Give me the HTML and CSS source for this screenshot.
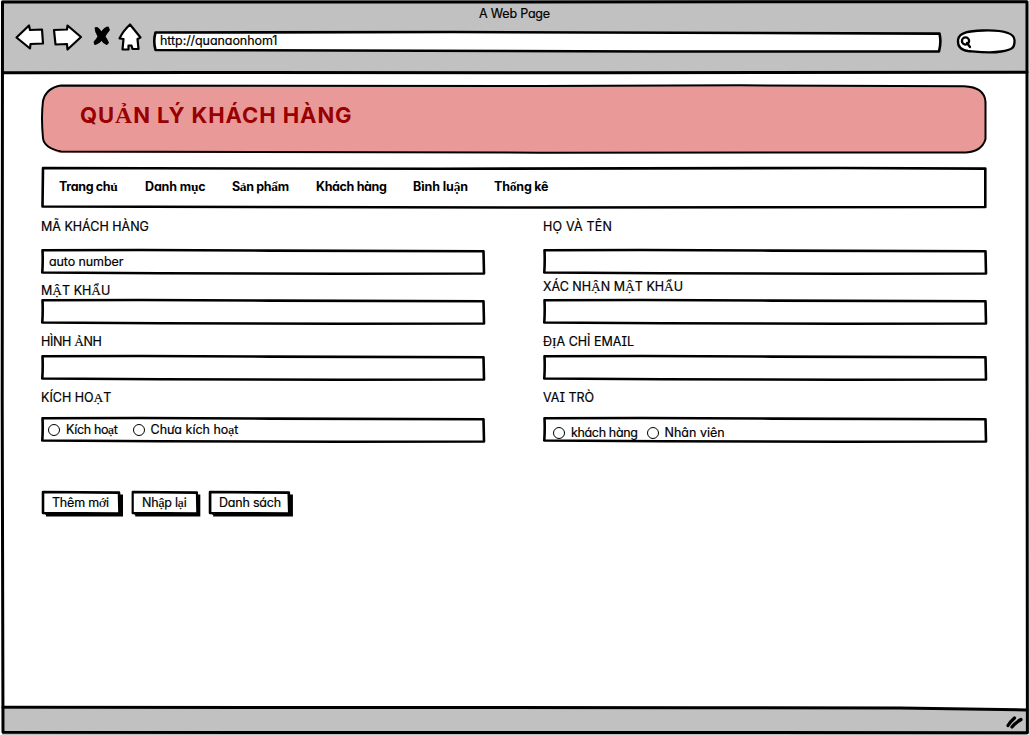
FILE: index.html
```html
<!DOCTYPE html>
<html lang="vi">
<head>
<meta charset="utf-8">
<title>Quản lý khách hàng</title>
<link rel="stylesheet" href="styles.css">
</head>
<body>
<svg class="defs" width="0" height="0">
  <symbol id="field" viewBox="0 0 446 28" preserveAspectRatio="none">
    <path d="M2.5 2.3 L100 2 L230 2.6 L443.5 3.2 L444 25.5 L300 25.7 L120 25.2 L2.3 24.500 Q3 13 2.500 2.300Z"/>
  </symbol>
  <symbol id="btn" viewBox="0 0 84 28" preserveAspectRatio="none">
    <path d="M3.5 4.5H82V26.500H5V25L3.5 24Z" fill="#000" stroke="none"/>
    <path d="M2 2 L78 2.6 L78.500 23.6 L2 23Z"/>
  </symbol>
</svg>
<div class="window">
  <svg class="ink" viewBox="0 0 1029 735">
    <path d="M2.5 2 L1027 1.8 L1027 300 L1027.4 732.7 L3 732.3 L2.2 400Z"/>
    <path d="M3 72.8 L200 72.4 L600 72.8 L1027 72.2 M3 707.3 L700 707.7 L900 708 L1027 710"/>
  </svg>
  <header class="chrome">
    <div class="caption">A Web Page</div>
    <div class="tools">
      <svg class="nav-icons" viewBox="0 0 130 32">
        <path d="M2.500 15.500 L15 3.500 L16 8 L28 7.500 L29 21.500 L16.500 22 L16 26.500Z"/>
        <path d="M40 8 L53 7.500 L53.500 3.500 L67 15 L53.500 27.500 L53 22 L41.500 22.500Z"/>
        <path d="M81.500 6 Q84 5 87.500 11 Q90.500 6 94 5.500 L95 8 Q92.500 11 90.500 14.500 Q93 18 94 20.500 L92.500 22 Q89.500 20.500 87.500 17.500 Q84.500 21.500 81 22 L80.500 20 Q82.500 18.500 84.500 14.500 Q81.500 10 81.500 6Z" class="cross"/>
        <path d="M116 2.500 L126.500 15.500 L123.500 17 L124.500 27 L118.500 27 L117.500 23.500 L114.500 23.500 L114.500 27.500 L108.500 27.500 L109.500 17 L105.500 16.500 Q109 9 116 2.500Z"/>
      </svg>
      <div class="address">
        <svg class="ink" viewBox="0 0 792 24"><path d="M3.500 2.500 L300 2 L787.500 3.600 Q789.500 12 787 21.500 L500 21.500 L3.500 20 Q1 11 3.500 2.500Z"/></svg>
        <span class="url">http://quanaonhom1</span>
      </div>
      <svg class="search" viewBox="0 0 62 28">
        <path d="M3 13 C4 5 15 4 28 3.500 C45 3 59 5 59.500 13 C60 21 57 23 46 24.500 C35 26.500 24 25 13 24 C6 23 2.500 19 3 13Z"/>
        <circle cx="10.500" cy="14" r="3.600"/><path d="M12 16 L15 20"/>
      </svg>
    </div>
  </header>
  <main class="page">
    <h1 class="banner">
      <svg class="ink" viewBox="0 0 950 74"><rect x="3" y="4" width="943" height="67" rx="20" class="fill"/><path d="M21 3.500 L500 4 L700 3.300 L924 4.300 Q944.500 5 945.500 20 L945.500 57 Q942 69.500 926 70.500 L500 70.700 L21 69.500 Q4 66 3 56 Q1 35 3 19 Q6 6 21 3.500Z"/></svg>
      <span>QU<i>Ả</i>N LÝ KHÁCH HÀNG</span>
    </h1>
    <nav class="menu">
      <svg class="ink" viewBox="0 0 947 44"><path d="M3 2 L400 2.800 L800 2 L945.300 2.600 L945.300 41 L500 41.500 L2.500 40.500 L3 2Z"/></svg>
      <a class="home">Trang ch<i>ủ</i></a><a class="category">Danh m<i>ụ</i>c</a><a class="product">S<i>ả</i>n ph<i>ẩ</i>m</a><a class="customer">Khách hàng</a><a class="comment">Bình lu<i>ậ</i>n</a><a class="stats">Th<i>ố</i>ng kê</a>
    </nav>
    <form class="columns">
      <div class="column">
        <label class="name">MÃ KHÁCH HÀNG</label>
        <div class="box"><svg class="ink"><use href="#field"/></svg><span class="auto">auto number</span></div>
        <label class="name two">M<i>Ậ</i>T KH<i>Ẩ</i>U</label>
        <div class="box"><svg class="ink"><use href="#field"/></svg></div>
        <label class="name three tight">HÌNH <i>Ả</i>NH</label>
        <div class="box"><svg class="ink"><use href="#field"/></svg></div>
        <label class="name four">KÍCH HO<i>Ạ</i>T</label>
        <div class="box"><svg class="ink"><use href="#field"/></svg><b class="radio"></b><span class="tight">Kích ho<i>ạ</i>t</span><b class="radio next"></b><span>Chưa kích ho<i>ạ</i>t</span></div>
      </div>
      <div class="column">
        <label class="name wide">HỌ VÀ TÊN</label>
        <div class="box"><svg class="ink"><use href="#field"/></svg></div>
        <label class="name two"><span class="raised">XÁC NH<i>Ậ</i>N M<i>Ậ</i>T KH<i>Ẩ</i>U</span></label>
        <div class="box"><svg class="ink"><use href="#field"/></svg></div>
        <label class="name three">Đ<i>Ị</i>A CHỈ EMA<u>I</u>L</label>
        <div class="box"><svg class="ink"><use href="#field"/></svg></div>
        <label class="name four">VA<u>I</u> TRÒ</label>
        <div class="box role"><svg class="ink"><use href="#field"/></svg><b class="radio"></b><span class="tight">khách hàng</span><b class="radio next"></b><span>Nhân viên</span></div>
      </div>
    </form>
    <div class="actions">
      <button class="add" type="button"><svg class="ink"><use href="#btn"/></svg><span>Thêm m<i>ớ</i>i</span></button>
      <button class="reset" type="button"><svg class="ink"><use href="#btn"/></svg><span>Nh<i>ậ</i>p l<i>ạ</i>i</span></button>
      <button class="list" type="button"><svg class="ink"><use href="#btn"/></svg><span>Danh sách</span></button>
    </div>
  </main>
  <footer class="status"><svg class="grip" viewBox="0 0 20 16"><path d="M3 11.500 Q5 8 9.500 4 M7 13 Q10 9 16 5.500"/></svg></footer>
</div>
</body>
</html>
```
FILE: styles.css
```css
* { box-sizing: border-box; }
body { margin: 0; background: #fff; color: #000; font: 12.5px/16px Inter, "Noto Sans", sans-serif; font-feature-settings: "cv11"; -webkit-text-stroke: 0.2px; }
.defs { position: absolute; }
i { font-style: normal; font-family: "Liberation Serif", serif; font-size: 1.08em; line-height: 0; }
u { text-decoration: none; font-feature-settings: "cv08"; }
svg { fill: none; stroke: #000; stroke-width: 2.6; stroke-linejoin: round; stroke-linecap: round; }
.ink { position: absolute; left: 0; top: 0; width: 100%; height: 100%; }
.ink use { width: 100%; height: 100%; }

.window { position: relative; width: 1029px; height: 735px; display: flex; flex-direction: column; overflow: hidden; }
.window > .ink { z-index: 1; stroke-width: 3; pointer-events: none; }

.chrome { height: 73px; margin: 0 2px; background: #c1c1c1; padding-top: 6px; }
.caption { text-align: center; letter-spacing: -0.2px; }
.tools { display: flex; align-items: flex-start; padding-left: 12px; }
.nav-icons { width: 130px; height: 32px; fill: #fff; stroke-width: 2.2; }
.cross { fill: #000; stroke-width: 1.8; }
.address { position: relative; width: 792px; height: 24px; margin: 8px 0 0 8px; padding: 3px 8px; }
.address .ink { fill: #fff; }
.url { position: relative; letter-spacing: -0.07px; }
.search { width: 62px; height: 28px; margin: 5px 0 0 11px; fill: #fff; stroke-width: 2.3; }

.page { flex: 1; padding: 9px 0 0 40px; }
.banner { position: relative; width: 950px; height: 74px; margin: 0; padding: 21px 0 0 40px; font-size: 22px; line-height: 24px; color: #900; letter-spacing: 0.92px; -webkit-text-stroke: 0; }
.banner .ink { stroke-width: 2; }
.banner .fill { fill: #ea9999; stroke: none; }
.banner span, .box span, .actions span, .menu a, .radio { position: relative; }

.menu { position: relative; width: 947px; height: 44px; margin: 10px 0 0; padding: 13px 0 0 19px; display: flex; font-weight: 700; letter-spacing: -0.35px; white-space: nowrap; -webkit-text-stroke: 0; }
.home { width: 86px; }
.category { width: 87px; letter-spacing: -0.15px; }
.product { width: 84px; }
.customer { width: 97px; }
.comment { width: 81px; letter-spacing: -0.1px; }
.stats { letter-spacing: -0.2px; }

.columns { display: flex; gap: 56px; padding-top: 9px; }
.column { width: 446px; }
.name { display: block; height: 29px; padding-left: 1px; white-space: nowrap; }
.two { height: 15px; margin-top: 7px; }
.three { height: 20px; margin-top: 8px; }
.four { height: 26px; margin-top: 8px; }
.raised { position: relative; top: -4px; }
.wide { letter-spacing: 0.2px; }
.tight { letter-spacing: -0.35px; }
.box { position: relative; height: 28px; display: flex; align-items: center; white-space: nowrap; }
.auto { margin-left: 9px; letter-spacing: -0.1px; }
.radio { width: 12px; height: 12px; border: 1.3px solid #000; border-radius: 50%; margin: 0 6px 0 8px; }
.radio.next { margin-left: 15px; }
.role { padding: 6px 0 0 3px; }
.role .radio.next { margin-left: 9px; }

.actions { display: flex; gap: 6px; padding: 46px 0 0 1px; }
.actions button { position: relative; height: 28px; border: 0; background: none; padding: 0 0 3px 11px; text-align: left; font: inherit; font-feature-settings: inherit; color: inherit; letter-spacing: -0.2px; white-space: nowrap; }
.actions .ink { fill: #fff; }
.reset { width: 71px; }
.add { width: 84px; }
.list { width: 87px; }

.status { height: 26px; margin: 0 2px; background: #c1c1c1; display: flex; justify-content: flex-end; }
.grip { width: 20px; height: 16px; margin: 5px 2px 0 0; stroke-width: 3.2; }
```
